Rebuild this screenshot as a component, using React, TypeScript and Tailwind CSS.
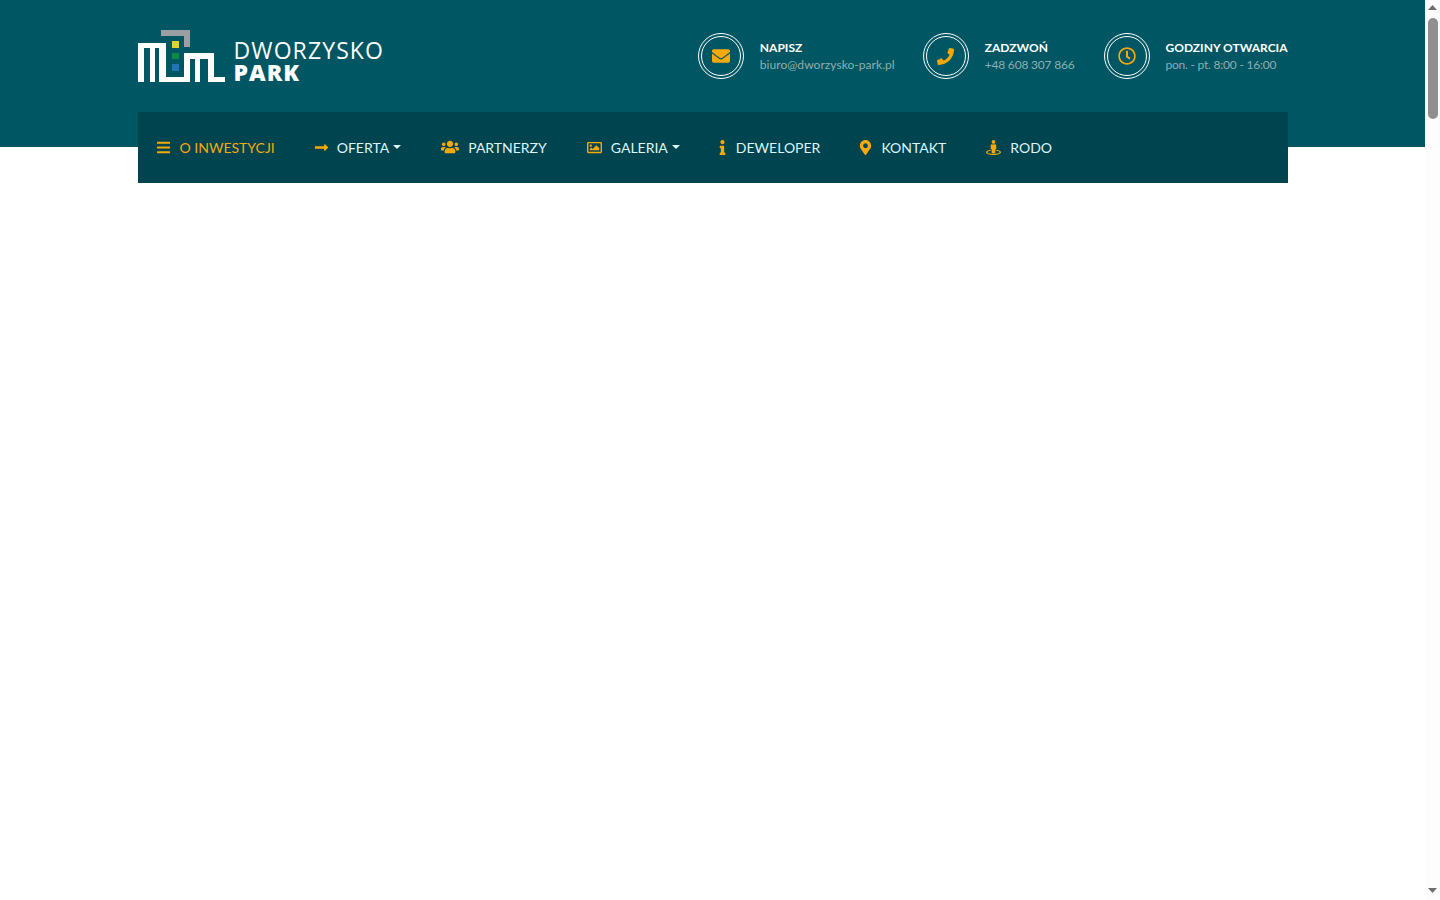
import { FaBars, FaEnvelope, FaInfo, FaLongArrowAltRight, FaMapMarkerAlt, FaPhone, FaRegClock, FaRegImage, FaStreetView, FaUsers } from "react-icons/fa";
import type { IconType } from "react-icons";

const contacts: { icon: IconType; title: string; text: string; size: string; tracking: string; gap: string }[] = [
  { icon: FaEnvelope, title: "NAPISZ", text: "biuro@dworzysko-park.pl", size: "text-[18px]", tracking: "tracking-[0.05px]", gap: "gap-[16px]" },
  { icon: FaPhone, title: "ZADZWOŃ", text: "+48 608 307 866", size: "text-[17px]", tracking: "tracking-[-0.2px]", gap: "gap-[16px]" },
  { icon: FaRegClock, title: "GODZINY OTWARCIA", text: "pon. - pt. 8:00 - 16:00", size: "text-[18px]", tracking: "tracking-[-0.22px]", gap: "ml-[2px] gap-[15px]" },
];

const menu: { icon: IconType; label: string; caret?: boolean; active?: boolean; box: string; size: string }[] = [
  { icon: FaBars, label: "O INWESTYCJI", active: true, box: "w-[13px] mr-[10px]", size: "text-[15px]" },
  { icon: FaLongArrowAltRight, label: "OFERTA", caret: true, box: "w-[13px] mr-[9px]", size: "text-[15px]" },
  { icon: FaUsers, label: "PARTNERZY", box: "w-[18px] mr-[9px]", size: "text-[18px]" },
  { icon: FaRegImage, label: "GALERIA", caret: true, box: "w-[15px] mr-[9px]", size: "text-[15px]" },
  { icon: FaInfo, label: "DEWELOPER", box: "w-[6px] mr-[10px]", size: "text-[15px]" },
  { icon: FaMapMarkerAlt, label: "KONTAKT", box: "w-[10px] mr-[11px]", size: "text-[15px]" },
  { icon: FaStreetView, label: "RODO", box: "w-[14px] mr-[10px]", size: "text-[15px]" },
];

function Logo() {
  return (
    <div className="flex items-start">
      <svg width="88" height="52" viewBox="0 0 88 52" className="block">
        <path d="M23 0H52V17H46V6H23Z" fill="#9a9fa3" />
        <rect x="34" y="11" width="7" height="7" fill="#d6d92b" />
        <rect x="34" y="23" width="7" height="6" fill="#0f8a45" />
        <rect x="34" y="34" width="7" height="7" fill="#1f75b8" />
        <path
          d="M0 13H28V47H46V23H76V47H87V52H70V29H62V52H57V29H52V52H21V18H17V52H12V18H6V52H0Z"
          fill="#ffffff"
        />
      </svg>
      <div className="ml-[8px] mt-[8px] font-['Open_Sans',sans-serif] text-white">
        <div className="text-[23px] leading-[24px] tracking-[1.1px]">DWORZYSKO</div>
        <div className="text-[23px] leading-[20px] font-extrabold tracking-[1px]">PARK</div>
      </div>
    </div>
  );
}

function Scrollbar() {
  return (
    <aside className="flex h-screen w-[15px] shrink-0 flex-col items-center bg-[#fdfdfd]">
      <svg width="15" height="18" viewBox="0 0 15 18" className="block shrink-0">
        <path d="M3 10L7.5 5L12 10Z" fill="#6e6e6e" />
      </svg>
      <div className="ml-[1px] h-[101px] w-[10px] rounded-[5px] bg-[#8f8f8f]" />
      <svg width="15" height="18" viewBox="0 0 15 18" className="mt-auto block shrink-0">
        <path d="M3 6H12L7.5 11Z" fill="#6e6e6e" />
      </svg>
    </aside>
  );
}

export default function App() {
  return (
    <div className="flex h-screen overflow-hidden bg-white font-['Lato',sans-serif]">
      <main className="min-w-0 flex-1">
        <header className="h-[147px] bg-[#005662]">
          <div className="mx-auto w-[1150px]">
            <div className="flex h-[112px] items-center justify-between">
              <Logo />
              <div className="flex gap-[28px]">
                {contacts.map(({ icon: Icon, title, text, size, tracking, gap }) => (
                  <div key={title} className={`flex items-center ${gap}`}>
                    <div className="flex h-[46px] w-[46px] items-center justify-center rounded-full border border-white p-[2px]">
                      <div className={`flex h-full w-full items-center justify-center rounded-full border border-white text-[#f7a90c] ${size}`}>
                        <Icon />
                      </div>
                    </div>
                    <div className="text-[12px] leading-[17px]">
                      <div className="font-bold text-white">{title}</div>
                      <div className={`text-[#8fadb2] ${tracking}`}>{text}</div>
                    </div>
                  </div>
                ))}
              </div>
            </div>
            <nav className="flex h-[71px] items-center gap-[40px] bg-[#00444f] pb-[1px] pl-[19px] text-[14px]">
              {menu.map(({ icon: Icon, label, caret, active, box, size }) => (
                <a key={label} href="#" className={`flex items-center ${active ? "text-[#f7a90c]" : "text-[#dff5f7]"}`}>
                  <span className={`flex justify-center text-[#f7a90c] ${box} ${size}`}>
                    <Icon className="shrink-0" />
                  </span>
                  <span>{label}</span>
                  {caret ? <span className="ml-[4px] h-0 w-0 border-x-[4px] border-t-[4px] border-x-transparent border-t-[#dff5f7]" /> : null}
                </a>
              ))}
            </nav>
          </div>
        </header>
      </main>
      <Scrollbar />
    </div>
  );
}
